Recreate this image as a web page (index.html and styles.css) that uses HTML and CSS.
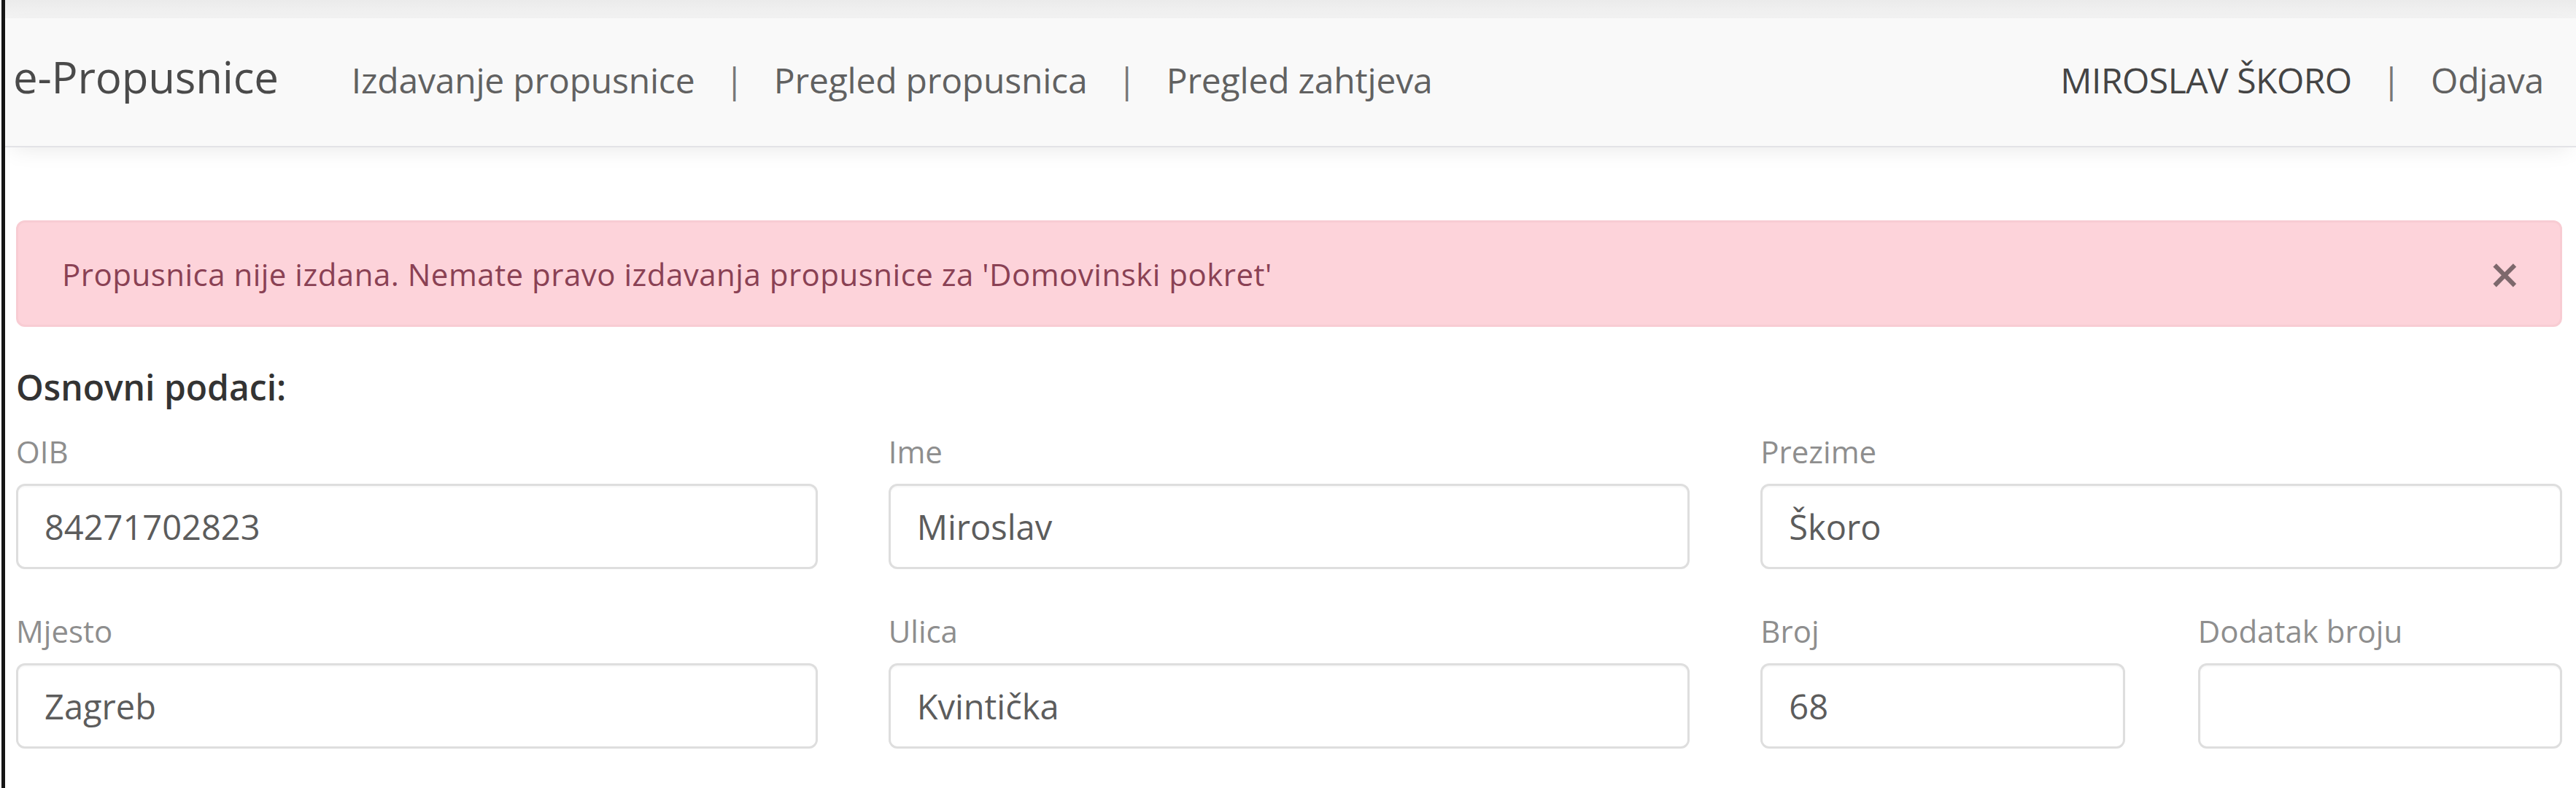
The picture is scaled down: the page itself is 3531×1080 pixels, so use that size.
FILE: index.html
```html
<!DOCTYPE html>
<html lang="hr">
<head>
<meta charset="utf-8">
<title>e-Propusnice</title>
<link rel="stylesheet" href="styles.css">
</head>
<body>
<div class="page">
  <div class="topbar"></div>
  <nav class="navbar">
    <a class="brand" href="#">e-Propusnice</a>
    <ul class="nav">
      <li><a href="#">Izdavanje propusnice</a></li>
      <li class="sep">|</li>
      <li><a href="#">Pregled propusnica</a></li>
      <li class="sep">|</li>
      <li><a href="#">Pregled zahtjeva</a></li>
    </ul>
    <ul class="nav nav-user">
      <li class="user">MIROSLAV ŠKORO</li>
      <li class="sep">|</li>
      <li><a href="#">Odjava</a></li>
    </ul>
  </nav>
  <main class="content">
    <div class="alert">
      Propusnica nije izdana. Nemate pravo izdavanja propusnice za 'Domovinski pokret'
      <button class="close" type="button">×</button>
    </div>
    <h4 class="section-title">Osnovni podaci:</h4>
    <div class="form-grid">
      <div class="field">
        <label>OIB</label>
        <input class="form-control" type="text" value="84271702823" readonly>
      </div>
      <div class="field">
        <label>Ime</label>
        <input class="form-control" type="text" value="Miroslav" readonly>
      </div>
      <div class="field">
        <label>Prezime</label>
        <input class="form-control" type="text" value="Škoro" readonly>
      </div>
      <div class="field">
        <label>Mjesto</label>
        <input class="form-control" type="text" value="Zagreb" readonly>
      </div>
      <div class="field">
        <label>Ulica</label>
        <input class="form-control" type="text" value="Kvintička" readonly>
      </div>
      <div class="field-split">
        <div class="field">
          <label>Broj</label>
          <input class="form-control" type="text" value="68" readonly>
        </div>
        <div class="field">
          <label>Dodatak broju</label>
          <input class="form-control" type="text" value="" readonly>
        </div>
      </div>
    </div>
  </main>
</div>
</body>
</html>
```
FILE: styles.css
```css
* {
  box-sizing: border-box;
}

html,
body {
  margin: 0;
  background: #fff;
}

body {
  padding-left: 2px;
  font-family: "Open Sans", "Noto Sans", sans-serif;
  overflow: hidden;
}

.page {
  border-left: 5px solid #151515;
  min-height: 1080px;
}

.topbar {
  height: 25px;
  background: linear-gradient(#ebebeb, #f3f3f3);
}

.navbar {
  position: relative;
  display: flex;
  align-items: baseline;
  height: 177px;
  padding: 40px 44px 0 11px;
  background: #f9f9f9;
  border-bottom: 2px solid #e3e3e7;
  box-shadow: 0 10px 30px -10px rgba(0, 0, 0, 0.1);
}

.brand {
  font-size: 60px;
  line-height: 80px;
  color: #4a4a4a;
  text-decoration: none;
  letter-spacing: -0.2px;
  margin-right: 100px;
}

.nav {
  list-style: none;
  margin: 0;
  padding: 0;
  display: flex;
  align-items: baseline;
  gap: 41px;
  font-size: 48px;
  line-height: 72px;
}

.nav-user {
  margin-left: auto;
}

.nav a {
  color: #616161;
  text-decoration: none;
  letter-spacing: -0.2px;
}

.sep {
  color: #777;
}

.user {
  color: #444;
  letter-spacing: -0.5px;
}

.content {
  padding: 0 19px 0 15px;
}

.alert {
  position: relative;
  margin: 100px 0 54px;
  padding: 39px 140px 38px 60px;
  background: #fdd3da;
  border: 3px solid #f8ccd3;
  border-radius: 12px;
  color: #8a4154;
  font-size: 42px;
  line-height: 63px;
  letter-spacing: 0.5px;
}

.close {
  position: absolute;
  top: 0;
  right: 0;
  bottom: 0;
  display: flex;
  align-items: center;
  padding: 0 55px;
  background: none;
  border: 0;
  font-family: "Open Sans", sans-serif;
  font-size: 72px;
  font-weight: 600;
  line-height: 1;
  color: #000;
  opacity: 0.5;
}

.section-title {
  margin: 0;
  font-size: 48px;
  font-weight: 600;
  line-height: 58px;
  color: #333;
}

.form-grid {
  display: grid;
  grid-template-columns: repeat(3, 1fr);
  column-gap: 97px;
  row-gap: 53px;
  margin-top: 27px;
}

.field-split {
  display: grid;
  grid-template-columns: 1fr 1fr;
  column-gap: 100px;
}

.field label {
  display: block;
  font-size: 42px;
  line-height: 63px;
  color: #8e8e8e;
  margin-bottom: 13px;
}

.form-control {
  display: block;
  width: 100%;
  height: 117px;
  margin: 0;
  padding: 0 36px;
  border: 3px solid #dedede;
  border-radius: 12px;
  background: #fff;
  font-family: "Open Sans", sans-serif;
  font-size: 47px;
  color: #5c5c5c;
  outline: none;
  box-shadow: inset 0 2px 2px rgba(0, 0, 0, 0.03);
}
```
